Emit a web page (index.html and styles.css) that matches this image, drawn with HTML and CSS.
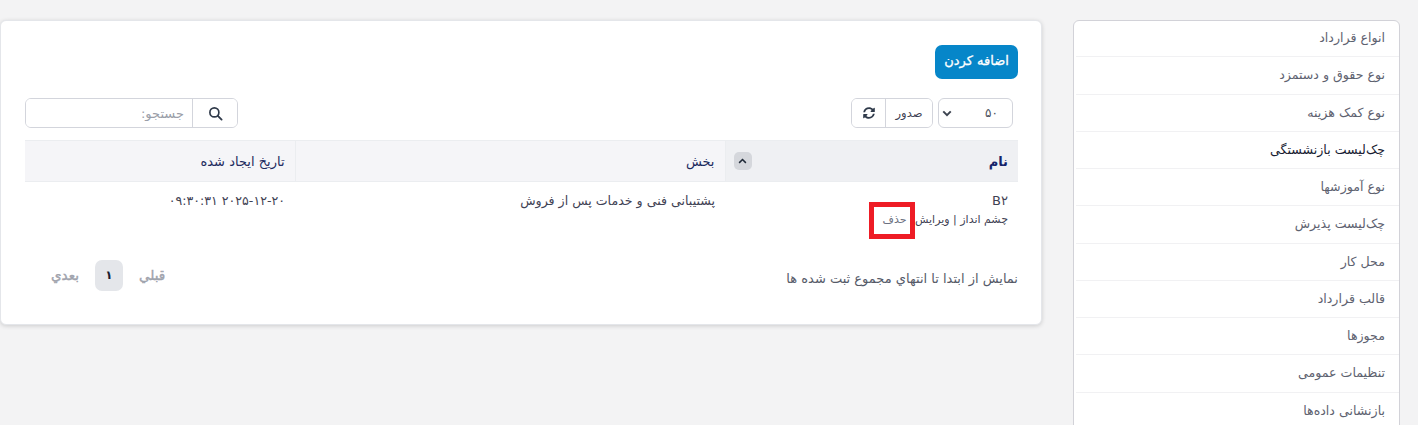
FILE: index.html
```html
<!DOCTYPE html>
<html lang="fa" dir="rtl">
<head>
<meta charset="utf-8">
<title>چک‌لیست بازنشستگی</title>
<link rel="stylesheet" href="styles.css">
</head>
<body>
<div class="page">
  <nav class="side">
    <a class="side-item">انواع قرارداد</a>
    <a class="side-item">نوع حقوق و دستمزد</a>
    <a class="side-item">نوع کمک هزینه</a>
    <a class="side-item active">چک‌لیست بازنشستگی</a>
    <a class="side-item">نوع آموزشها</a>
    <a class="side-item">چک‌لیست پذیرش</a>
    <a class="side-item">محل کار</a>
    <a class="side-item">قالب قرارداد</a>
    <a class="side-item">مجوزها</a>
    <a class="side-item">تنظیمات عمومی</a>
    <a class="side-item">بازنشانی داده‌ها</a>
  </nav>
  <main class="card">
    <div class="add-row"><button class="add-btn">اضافه کردن</button></div>
    <div class="toolbar">
      <div class="tools">
        <div class="select"><span>۵۰</span>
          <svg class="chev" viewBox="0 0 12 8" width="10" height="7"><path d="M1.500 1.500 6 6l4.500-4.500" fill="none" stroke="#3d4450" stroke-width="2.400"/></svg>
        </div>
        <div class="group">
          <button class="g-btn export">صدور</button>
          <button class="g-btn refresh">
            <svg viewBox="0 0 512 512" width="12" height="12"><path fill="#2f3a4a" d="M370.720 133.280C339.458 104.008 298.888 87.962 255.848 88c-77.458.068-144.328 53.178-162.791 126.850-1.344 5.363-6.122 9.150-11.651 9.150H24.103c-7.498 0-13.194-6.807-11.807-14.176C33.933 94.924 134.813 8 256 8c66.448 0 126.791 26.136 171.315 68.685L463.030 40.970C478.149 25.851 504 36.559 504 57.941V192c0 13.255-10.745 24-24 24H345.941c-21.382 0-32.090-25.851-16.971-40.971l41.750-41.749zM32 296h134.059c21.382 0 32.090 25.851 16.971 40.971l-41.750 41.750c31.262 29.273 71.835 45.319 114.876 45.280 77.418-.07 144.315-53.144 162.787-126.849 1.344-5.363 6.122-9.150 11.651-9.150h57.304c7.498 0 13.194 6.807 11.807 14.176C478.067 417.076 377.187 504 256 504c-66.448 0-126.791-26.136-171.315-68.685L48.970 471.030C33.851 486.149 8 475.441 8 454.059V320c0-13.255 10.745-24 24-24z"/></svg>
          </button>
        </div>
      </div>
      <div class="search">
        <button class="search-btn">
          <svg viewBox="0 0 16 16" width="15" height="15"><circle cx="6.800" cy="6.800" r="4.800" fill="none" stroke="#2f3a4a" stroke-width="1.800"/><path d="m10.500 10.500 4 4" stroke="#2f3a4a" stroke-width="2" stroke-linecap="round"/></svg>
        </button>
        <input class="search-input" placeholder="جستجو:">
      </div>
    </div>
    <table class="grid">
      <thead>
        <tr>
          <th class="c-name sorted"><div class="th-in"><span>نام</span><span class="sort"><svg viewBox="0 0 12 8" width="9" height="6"><path d="M1.500 6.500 6 2l4.500 4.500" fill="none" stroke="#1f2937" stroke-width="2"/></svg></span></div></th>
          <th class="c-sec">بخش</th>
          <th class="c-date">تاریخ ایجاد شده</th>
        </tr>
      </thead>
      <tbody>
        <tr>
          <td>
            <div class="title">B۲</div>
            <div class="actions"><a>چشم انداز</a> | <a>ویرایش</a> <span class="del">حذف</span></div>
          </td>
          <td>پشتیبانی فنی و خدمات پس از فروش</td>
          <td class="date">۲۰۲۵-۱۲-۲۰ ۰۹:۳۰:۳۱</td>
        </tr>
      </tbody>
    </table>
    <div class="foot">
      <div class="info">نمايش از ابتدا تا انتهاي مجموع ثبت شده ها</div>
      <div class="pager"><span class="pg">قبلي</span><span class="pg-num">۱</span><span class="pg">بعدي</span></div>
    </div>
  </main>
</div>
</body>
</html>
```
FILE: styles.css
```css
* { box-sizing: border-box; }
html, body { margin: 0; height: 100%; overflow: hidden; }
body {
  background: #f3f3f4;
  font-family: "DejaVu Sans", "Noto Sans", sans-serif;
  font-size: 12px;
  color: #3f4254;
}
.page {
  display: flex;
  align-items: flex-start;
  padding: 20px 18px 0 0;
  gap: 31px;
}
.side {
  width: 327px;
  flex: none;
  background: #fff;
  border: 1px solid #d2d2d8;
  border-radius: 6px;
  display: flex;
  flex-direction: column;
  padding-left: 2px;
}
.side-item {
  height: 37.25px;
  line-height: 36px;
  padding: 0 14px;
  color: #5e6270;
  font-size: 12.6px;
  border-bottom: 1px solid #f1f1f3;
}
.side-item:first-child { height: 36.25px; line-height: 33px; }
.side-item.active { color: #181c32; }
.card {
  width: 1042px;
  flex: none;
  height: 305px;
  background: #fff;
  border: 1px solid #e4e6ea;
  border-radius: 6px;
  box-shadow: 0 1px 4px rgba(0,0,0,.16);
  padding: 24px 23px 0 24px;
}
.add-row { display: flex; height: 53px; }
.add-btn {
  width: 83px;
  height: 34px;
  border: 0;
  border-radius: 7px;
  background: #0686c9;
  color: #fff;
  font: 400 13px "DejaVu Sans", sans-serif;
  -webkit-text-stroke: .3px #fff;
  padding: 0 0 3px;
}
.toolbar {
  display: flex;
  justify-content: space-between;
  height: 42px;
}
.tools { display: flex; gap: 5px; height: 30px; padding-right: 5px; }
.select {
  width: 75px;
  height: 30px;
  border: 1px solid #d3d5dc;
  border-radius: 6px;
  padding: 0 14px 0 3px;
  display: flex;
  justify-content: space-between;
  align-items: center;
  font-size: 12px;
  color: #4b5160;
}
.group {
  display: flex;
  height: 30px;
  border: 1px solid #d3d5dc;
  border-radius: 6px;
  overflow: hidden;
}
.g-btn {
  border: 0;
  background: #fff;
  padding: 0;
  font: 11.500px "DejaVu Sans", sans-serif;
  color: #3f4254;
  display: flex;
  align-items: center;
  justify-content: center;
}
.export { width: 47px; border-left: 1px solid #d3d5dc; }
.refresh { width: 33px; }
.search {
  display: flex;
  width: 213px;
  height: 30px;
  border: 1px solid #d3d5dc;
  border-radius: 6px;
  overflow: hidden;
}
.search-input {
  flex: 1;
  min-width: 0;
  border: 0;
  outline: 0;
  padding: 0 8px;
  font: 13px "DejaVu Sans", sans-serif;
  background: #fff;
}
.search-input::placeholder { color: #9a9ea8; }
.search-btn {
  width: 45px;
  border: 0;
  border-left: 1px solid #d3d5dc;
  background: #fff;
  padding: 0;
  display: flex;
  align-items: center;
  justify-content: center;
}
.grid {
  width: 993px;
  border-collapse: collapse;
  table-layout: fixed;
}
.grid th {
  height: 41px;
  background: #f5f5f8;
  border-top: 1px solid #ebedf0;
  border-bottom: 1px solid #ebedf0;
  border-left: 1px solid #ebedf0;
  padding: 0 10px;
  text-align: right;
  font-weight: 400;
  font-size: 13px;
  color: #1c2a5e;
}
.grid th:last-child { border-left: 0; }
.grid th.sorted { background: #eff0f3; font-weight: 700; color: #14246b; }
.c-name { width: 293px; }
.c-sec { width: 430px; }
.th-in { display: flex; justify-content: space-between; align-items: center; }
.sort {
  width: 18px;
  height: 18px;
  border-radius: 5px;
  background: #d5d7dc;
  display: flex;
  align-items: center;
  justify-content: center;
  margin-left: -2px;
}
.grid td {
  vertical-align: top;
  padding: 11px 10px 0;
  font-size: 12.600px;
  color: #3f4254;
}
.title { font-size: 13px; line-height: 16px; }
.actions { margin-top: 3px; font-size: 11px; line-height: 16px; white-space: nowrap; color: #3f4254; }
.del {
  color: #6b7080;
  display: inline-block;
  border: 5px solid #ee1c25;
  width: 46px;
  height: 37px;
  line-height: 26px;
  padding-right: 3px;
  text-align: right;
  margin: -10px -3px -11px 0;
  vertical-align: top;
}
.foot {
  display: flex;
  justify-content: space-between;
  align-items: center;
  margin-top: 31px;
  height: 32px;
}
.info { font-size: 13px; color: #555a68; padding-top: 7px; }
.pager { display: flex; align-items: center; gap: 16px; padding-left: 26px; }
.pg { color: #9fa3ad; font-size: 13.500px; -webkit-text-stroke: .4px #9fa3ad; }
.pg-num {
  width: 28px;
  height: 31px;
  border-radius: 7px;
  background: #e4e6ea;
  color: #181c32;
  display: flex;
  align-items: center;
  justify-content: center;
  font-weight: 700;
}
```
